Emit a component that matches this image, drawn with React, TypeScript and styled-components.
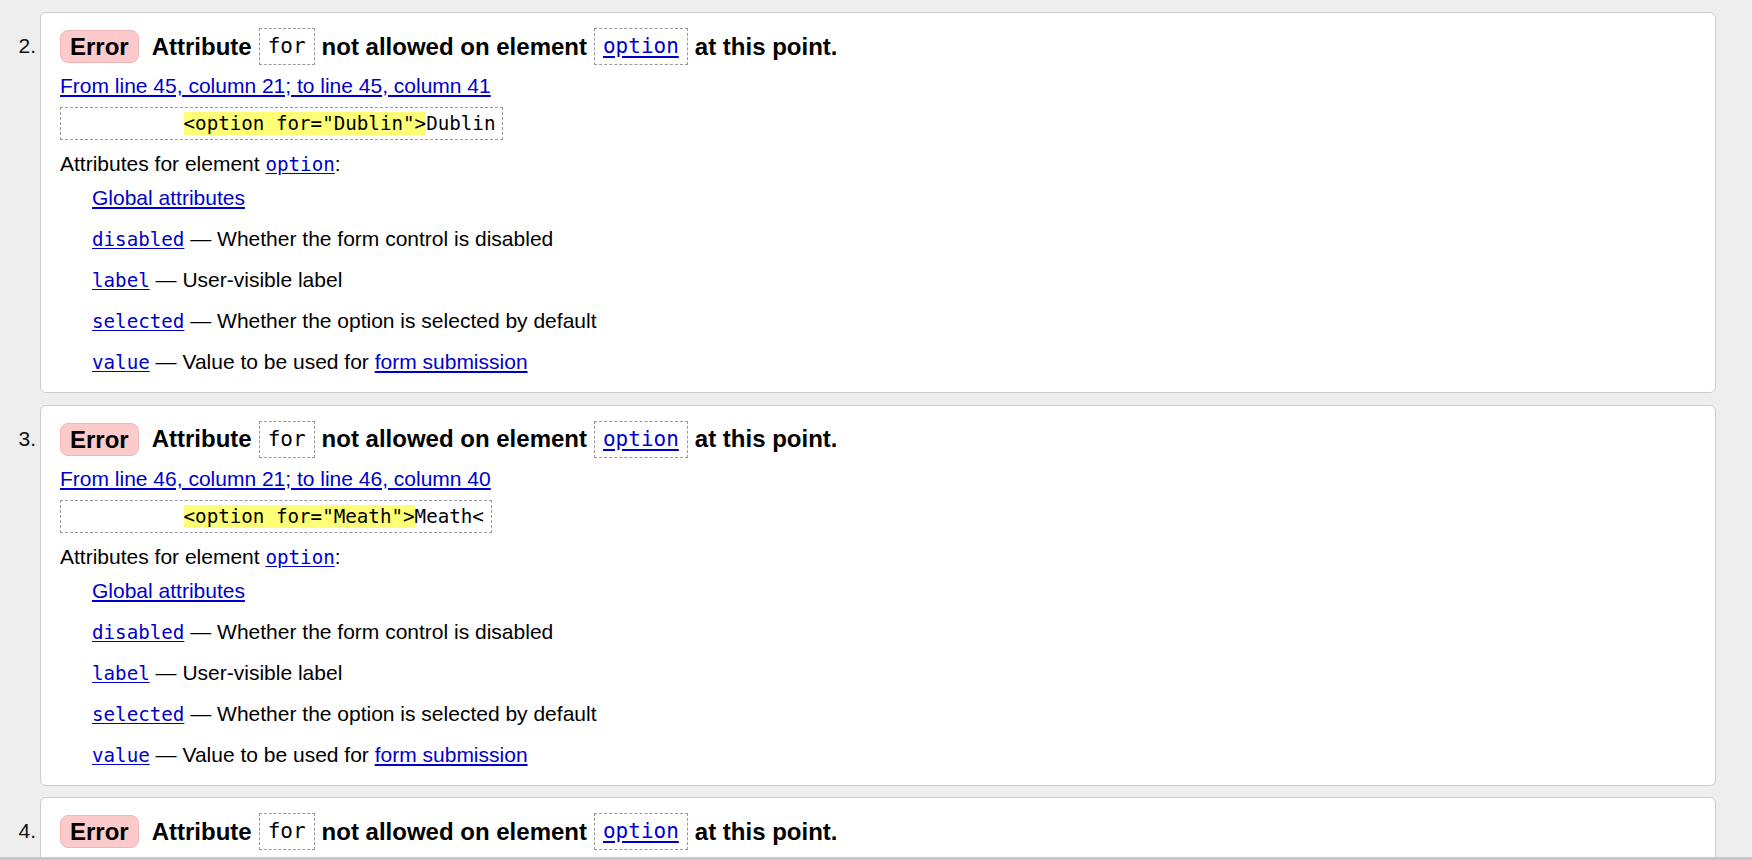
import React from "react";
import styled, { createGlobalStyle } from "styled-components";

interface IAttr {
  name: string;
  text: string;
  link?: string;
}
interface IError {
  num: number;
  range: string;
  code: string;
  rest: string;
}

const GlobalStyle = createGlobalStyle`
  html, body {
    margin: 0;
    padding: 0;
    background-color: #eeeeee;
    overflow: hidden;
  }
  body {
    font-family: "Liberation Sans", Arial, sans-serif;
    color: #000000;
  }
`;

const Page = styled.ol`
  margin: 0;
  padding: 12px 36px 0 0;
  list-style: none;
  display: flex;
  flex-direction: column;
  gap: 11.5px;
`;
const Item = styled.li`
  display: flex;
  align-items: flex-start;
`;
const Num = styled.div`
  width: 40px;
  flex-shrink: 0;
  box-sizing: border-box;
  padding: 22px 4px 0 0;
  text-align: right;
  font-size: 21px;
  line-height: 24px;
  color: #111111;
`;
const Card = styled.div`
  flex: 1;
  display: flex;
  flex-direction: column;
  align-items: flex-start;
  padding: 15px 19px 18px 19px;
  background-color: #ffffff;
  border: 1px solid #cccccc;
  border-radius: 6px;
`;
const Heading = styled.div`
  display: flex;
  align-items: center;
  gap: 7px;
  height: 37px;
  font-size: 24px;
  font-weight: bold;
  white-space: nowrap;
`;
const Badge = styled.span`
  display: inline-block;
  margin-right: 6px;
  padding: 0 9px;
  line-height: 31px;
  background-color: #fccaca;
  border: 1px solid #f1b7b7;
  border-radius: 8px;
`;
const HeadCode = styled.code<{ $link?: boolean }>`
  display: inline-block;
  padding: 0 8px;
  line-height: 35px;
  font-family: "DejaVu Sans Mono", "Liberation Mono", monospace;
  font-size: 21px;
  font-weight: normal;
  border: 1px dashed #999999;
  color: ${(p) => (p.$link ? "#0000cc" : "#000000")};
  text-decoration: ${(p) => (p.$link ? "underline" : "none")};
  text-underline-offset: 3px;
`;
const Location = styled.a`
  margin-top: 9px;
  font-size: 21px;
  line-height: 24px;
  color: #0000cc;
  text-decoration: underline;
  text-underline-offset: 2px;
`;
const Extract = styled.pre`
  margin: 9px 0 0 0;
  padding: 4px 7px;
  border: 1px dashed #999999;
  font-family: "DejaVu Sans Mono", "Liberation Mono", monospace;
  font-size: 19.2px;
  line-height: 23px;
  color: #000000;
`;
const Mark = styled.mark`
  background-color: #ffff77;
  color: #000000;
`;
const Text = styled.p`
  margin: 12px 0 0 0;
  font-size: 21px;
  line-height: 24px;
`;
const Mono = styled.a`
  font-family: "DejaVu Sans Mono", "Liberation Mono", monospace;
  font-size: 19.2px;
  line-height: 1;
  color: #0000cc;
  text-decoration: underline;
  text-underline-offset: 2px;
`;
const Link = styled.a`
  color: #0000cc;
  text-decoration: underline;
  text-underline-offset: 2px;
`;
const AttrList = styled.dl`
  margin: 10px 0 0 32px;
  display: flex;
  flex-direction: column;
  gap: 17px;
  font-size: 21px;
  line-height: 24px;
`;
const AttrItem = styled.dd`
  margin: 0;
  height: 24px;
  white-space: nowrap;
`;
const BottomEdge = styled.div`
  position: fixed;
  left: 0;
  right: 0;
  bottom: 0;
  height: 3px;
  background-color: #c8c8c8;
`;

const attrs: IAttr[] = [
  { name: "disabled", text: "Whether the form control is disabled" },
  { name: "label", text: "User-visible label" },
  { name: "selected", text: "Whether the option is selected by default" },
  { name: "value", text: "Value to be used for ", link: "form submission" },
];

const errors: IError[] = [
  {
    num: 2,
    range: "From line 45, column 21; to line 45, column 41",
    code: '<option for="Dublin">',
    rest: "Dublin",
  },
  {
    num: 3,
    range: "From line 46, column 21; to line 46, column 40",
    code: '<option for="Meath">',
    rest: "Meath<",
  },
  {
    num: 4,
    range: "From line 47, column 21; to line 47, column 40",
    code: '<option for="Louth">',
    rest: "Louth<",
  },
];

const ErrorCard = ({ err }: { err: IError }) => {
  return (
    <Item>
      <Num>{err.num}.</Num>
      <Card>
        <Heading>
          <Badge>Error</Badge>
          <span>Attribute</span>
          <HeadCode>for</HeadCode>
          <span>not allowed on element</span>
          <HeadCode $link>option</HeadCode>
          <span>at this point.</span>
        </Heading>
        <Location href="#">{err.range}</Location>
        <Extract>
          {"          "}
          <Mark>{err.code}</Mark>
          {err.rest}
        </Extract>
        <Text>
          Attributes for element <Mono href="#">option</Mono>:
        </Text>
        <AttrList>
          <AttrItem>
            <Link href="#">Global attributes</Link>
          </AttrItem>
          {attrs.map((a) => (
            <AttrItem key={a.name}>
              <Mono href="#">{a.name}</Mono> — {a.text}
              {a.link && <Link href="#">{a.link}</Link>}
            </AttrItem>
          ))}
        </AttrList>
      </Card>
    </Item>
  );
};

export default function App() {
  return (
    <>
      <GlobalStyle />
      <Page>
        {errors.map((e) => (
          <ErrorCard key={e.num} err={e} />
        ))}
      </Page>
      <BottomEdge />
    </>
  );
}
